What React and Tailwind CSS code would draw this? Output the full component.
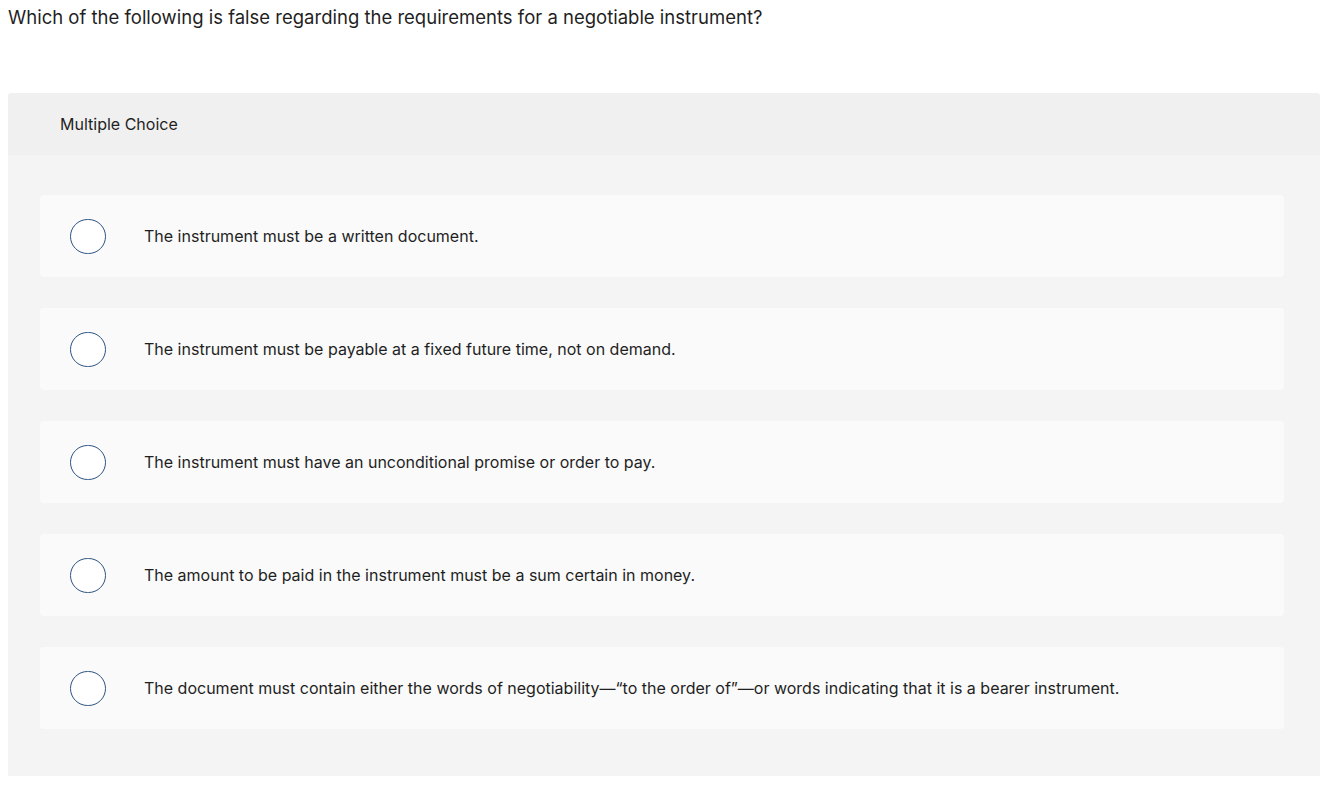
export default function App() {
  const options = [
    "The instrument must be a written document.",
    "The instrument must be payable at a fixed future time, not on demand.",
    "The instrument must have an unconditional promise or order to pay.",
    "The amount to be paid in the instrument must be a sum certain in money.",
    "The document must contain either the words of negotiability\u2014\u201cto the order of\u201d\u2014or words indicating that it is a bearer instrument.",
  ];
  return (
    <div className="w-[1334px] h-[786px] bg-white text-[#1f1f1f]" style={{ fontFamily: "Inter, 'Noto Sans', sans-serif" }}>
      <div className="pl-[8px] pt-[5px] h-[93px] text-[18.5px] leading-[24px]">
        Which of the following is false regarding the requirements for a negotiable instrument?
      </div>
      <div className="mx-[8px] w-[1312px] rounded-t-[3px] overflow-hidden">
        <div className="h-[62px] bg-[#f0f0f0] flex items-center pl-[52px] text-[16px]">Multiple Choice</div>
        <div className="bg-[#f4f4f4] pt-[40px] pb-[47px] pl-[32px] pr-[36px] flex flex-col gap-[31px]">
          {options.map((o, i) => (
            <div key={i} className="h-[82px] bg-[#fafafa] rounded-[4px] flex items-center pl-[30px]">
              <div className="w-[36px] h-[35px] rounded-full border-[1.6px] border-[#2d5480] bg-white shrink-0" />
              <div className="ml-[38px] text-[16px]">{o}</div>
            </div>
          ))}
        </div>
      </div>
    </div>
  );
}
